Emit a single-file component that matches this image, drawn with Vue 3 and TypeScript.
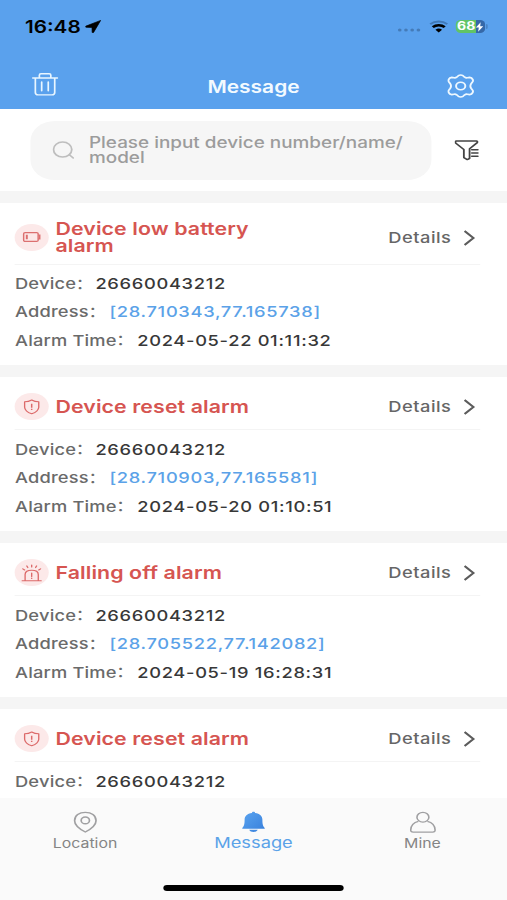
<script setup lang="ts">
type AlarmIcon = 'battery' | 'shield' | 'siren'

interface Alarm {
  id: number
  icon: AlarmIcon
  title: string
  device: string
  address: string
  time: string
}

const alarms: Alarm[] = [
  { id: 1, icon: 'battery', title: 'Device low battery alarm', device: '26660043212', address: '[28.710343,77.165738]', time: '2024-05-22 01:11:32' },
  { id: 2, icon: 'shield', title: 'Device reset alarm', device: '26660043212', address: '[28.710903,77.165581]', time: '2024-05-20 01:10:51' },
  { id: 3, icon: 'siren', title: 'Falling off alarm', device: '26660043212', address: '[28.705522,77.142082]', time: '2024-05-19 16:28:31' },
  { id: 4, icon: 'shield', title: 'Device reset alarm', device: '26660043212', address: '', time: '' },
]
</script>

<template>
  <div class="screen">
    <header class="header">
      <div class="status">
        <span class="clock">16:48</span>
        <svg class="arrow" width="13" height="13" viewBox="0 0 13 13"><path d="M12.6.4.5 6.1c-.7.4-.6 1.2.2 1.2l4.8.2.1 4.7c0 .8.9.9 1.2.2z" fill="#000" stroke="#000" stroke-width=".6" stroke-linejoin="round" /></svg>
        <span class="grow"></span>
        <svg class="dots" width="20" height="4" viewBox="0 0 20 4" fill="#447bb8"><circle cx="2" cy="2" r="1.5" /><circle cx="7.1" cy="2" r="1.5" /><circle cx="12.2" cy="2" r="1.5" /><circle cx="17.3" cy="2" r="1.5" /></svg>
        <svg class="wifi" width="16" height="13" viewBox="0 0 16 13" fill="none">
          <path d="M1 4.1a10.5 10.5 0 0 1 14 0" stroke="#4079b8" stroke-width="1.9" />
          <path d="M3.1 7.1a7.2 7.2 0 0 1 9.8 0" stroke="#000" stroke-width="2.4" />
          <path d="M5.3 9.7a4 4 0 0 1 5.4 0L8 12.6z" fill="#000" />
        </svg>
        <div class="battery">
          <span class="level">68</span>
          <svg width="7" height="10" viewBox="0 0 7 10"><path d="M4.4.3.5 5.5h2.4l-.6 4.2 4.2-5.5H4z" fill="#fff" /></svg>
        </div>
        <span class="cap"></span>
      </div>
      <div class="nav">
        <svg width="22" height="24" viewBox="0 0 22 24" fill="none" stroke="#e9f6ff" stroke-width="1.4" stroke-linejoin="round" stroke-linecap="round">
          <path d="M.9 6h20.2M6.3 5.8V3.2c0-1 .4-1.5 1.3-1.5h6.8c.9 0 1.3.5 1.3 1.5v2.6M3 6.3v14.2c0 1.6.8 2.4 2.3 2.4h11.3c1.5 0 2.3-.8 2.3-2.4V6.3M8.2 9.9v8.8M13.6 9.9v8.8" />
        </svg>
        <h1>Message</h1>
        <svg class="gear" width="22" height="24" viewBox="0 0 22 24" fill="none" stroke="#eef8ff" stroke-width="1.6" stroke-linejoin="round">
          <path d="M9.1 1.7Q11 .4 12.9 1.7L14.3 3.2Q15.2 4 16.4 3.8L18.4 3.4Q20.1 3.5 20.8 5.4Q21.5 7.2 20.5 8.2L19.6 9.6Q18.3 12 19.6 14.4L20.5 15.8Q21.5 16.8 20.8 18.6Q20.1 20.5 18.4 20.6L16.4 20.2Q15.2 20 14.3 20.8L12.9 22.3Q11 23.6 9.1 22.3L7.7 20.8Q6.8 20 5.6 20.2L3.6 20.6Q1.9 20.5 1.2 18.6Q.5 16.8 1.5 15.8L2.4 14.4Q3.7 12 2.4 9.6L1.5 8.2Q.5 7.2 1.2 5.4Q1.9 3.5 3.6 3.4L5.6 3.8Q6.8 4 7.7 3.2Z" />
          <circle cx="11" cy="12" r="3.8" />
        </svg>
      </div>
    </header>

    <div class="search-row">
      <div class="search">
        <svg width="19" height="20" viewBox="0 0 19 20" fill="none" stroke="#bebebe" stroke-width="1.5" stroke-linecap="round"><circle cx="8.4" cy="9.6" r="7.5" /><path d="m13.9 14.8 3.2 3.2" /></svg>
        <span>Please input device number/name/<br />model</span>
      </div>
      <svg class="filter" width="20" height="21" viewBox="0 0 20 21" fill="none" stroke="#444" stroke-width="1.5" stroke-linejoin="round" stroke-linecap="round">
        <path d="M12.2 18.5 10.4 19.6 7.6 17.6V9.5L.8 3Q.3 1.2 1.5 1.1H17.8Q19.2 1.3 18.6 2.6L12.3 8.8V18.5M14.1 9.8H19.1M14.1 13H19.1M14.1 16.2H19.1" />
      </svg>
    </div>

    <main class="list">
      <article v-for="alarm in alarms" :key="alarm.id" class="card">
        <div class="card-head">
          <div class="badge">
            <svg v-if="alarm.icon === 'battery'" width="16" height="12" viewBox="0 0 16 12" fill="none" stroke="#dc7070" stroke-width="1.2">
              <rect x="1.4" y="1.6" width="11.9" height="8.8" rx="1.2" /><path d="M13.5 4.2h1.1v3.6h-1.1" /><path d="M4 3.8v4.5" stroke-width="1.6" />
            </svg>
            <svg v-else-if="alarm.icon === 'shield'" width="14" height="16" viewBox="0 0 14 16" fill="none" stroke="#dc6a6a" stroke-width="1.1" stroke-linejoin="round">
              <path d="M7 1Q9.5 2.8 12.8 2.8V8.2Q12.6 12.5 7 14.8Q1.4 12.5 1.2 8.2V2.8Q4.5 2.8 7 1Z" /><path d="M7 4.8v4M7 9.8v1.3" stroke-width="1.2" />
            </svg>
            <svg v-else width="18" height="18" viewBox="0 0 18 18" fill="none" stroke="#dc6a6a" stroke-width="1.1" stroke-linecap="round">
              <path d="M1.2 16.7h15.6M3.6 16.4V10.6Q3.6 6.2 9 6.2T14.4 10.6V16.4M9 9v3.4M9 14v.4M9 1v2M5 1.9l.8 1.7M13 1.9l-.8 1.7M1.7 4.9l1.5 1.1M16.3 4.9l-1.5 1.1" />
            </svg>
          </div>
          <h2>{{ alarm.title }}</h2>
          <span class="details">Details</span>
          <svg class="chevron" width="10" height="16" viewBox="0 0 10 16" fill="none" stroke="#5c5c5c" stroke-width="1.8"><path d="m1.2 1 7.3 7-7.3 7" /></svg>
        </div>
        <dl>
          <div class="row"><dt>Device<i>：</i></dt><dd>{{ alarm.device }}</dd></div>
          <div v-if="alarm.address" class="row"><dt class="address-label">Address<i>：</i></dt><dd class="link">{{ alarm.address }}</dd></div>
          <div v-if="alarm.time" class="row"><dt class="time-label">Alarm Time<i>：</i></dt><dd>{{ alarm.time }}</dd></div>
        </dl>
      </article>
    </main>

    <footer class="tabs">
      <nav>
        <a class="tab">
          <svg width="20" height="22" viewBox="0 0 20 22" fill="none" stroke="#a0a0a2" stroke-width="1.4" stroke-linejoin="round"><path d="M10 21Q1.2 15.4 1.2 9.7C1.2 4.4 5 1.4 10 1.4s8.8 3 8.8 8.3Q18.8 15.4 10 21Z" /><circle cx="10" cy="9.4" r="3.4" /></svg>
          <span>Location</span>
        </a>
        <a class="tab active">
          <svg width="20" height="22" viewBox="0 0 20 22"><defs><linearGradient id="bell" x1="0" y1="0" x2="1" y2="1"><stop stop-color="#5aa4f0" /><stop offset="1" stop-color="#377fdb" /></linearGradient></defs><path d="M10 .8c.8 0 1.3.5 1.3 1.2 3.9.7 6 3.2 6 6.7 0 4.5.4 6.4 1.9 8.2v.8H.8v-.8c1.5-1.8 1.9-3.7 1.9-8.2 0-3.5 2.1-6 6-6.7 0-.7.5-1.2 1.3-1.2zM6.5 18.8h7c-.5 1.4-1.8 2.2-3.5 2.2s-3-.8-3.5-2.2z" fill="url(#bell)" /></svg>
          <span>Message</span>
        </a>
        <a class="tab">
          <svg width="22" height="22" viewBox="0 0 22 22" fill="none" stroke="#a0a0a2" stroke-width="1.3" stroke-linejoin="round"><circle cx="11" cy="6.2" r="4.9" /><path d="M7.3 10.4C3.3 11.6 1.2 14.6 1 18.9Q.9 21.1 3 21.1H19Q21.1 21.1 21 18.9C20.8 14.6 18.7 11.6 14.7 10.4" /></svg>
          <span>Mine</span>
        </a>
      </nav>
      <div class="home"></div>
    </footer>
  </div>
</template>

<style>
body {
  margin: 0;
  overflow: hidden;
}
</style>

<style scoped>
/* The phone layout is 416 units wide, widened to fill the viewport. */
.screen {
  width: 416px;
  height: 900px;
  transform: scaleX(1.21875);
  transform-origin: 0 0;
  display: flex;
  flex-direction: column;
  overflow: hidden;
  background: #fff;
  font-family: Inter, "Noto Sans CJK SC", sans-serif;
  font-weight: 500;
}
svg {
  display: block;
  flex: none;
}
.header {
  height: 109px;
  flex: none;
  background: #5aa1ed;
}
.status {
  display: flex;
  align-items: center;
  height: 53px;
  padding: 0 16px 0 20.5px;
  box-sizing: border-box;
}
.clock {
  width: 46px;
  font-size: 17px;
  font-weight: 600;
  white-space: nowrap;
}
.arrow {
  margin-left: 3.5px;
}
.grow {
  flex: 1;
}
.dots {
  margin: 7px 6px 0 0;
}
.wifi {
  margin-right: 5.5px;
}
.battery {
  display: flex;
  align-items: center;
  width: 24px;
  height: 13px;
  padding-left: 1.5px;
  box-sizing: border-box;
  border-radius: 4px;
  background: linear-gradient(90deg, #61c466 68%, #3568a8 68%);
}
.level {
  width: 15px;
  color: #fff;
  font-size: 11.5px;
  font-weight: 700;
  line-height: 13px;
}
.cap {
  width: 1.5px;
  height: 5px;
  margin-left: 1px;
  border-radius: 0 2px 2px 0;
  background: #447bb8;
}
.nav {
  display: flex;
  justify-content: space-between;
  align-items: center;
  height: 61px;
  padding: 0 27px 0 26px;
}
h1 {
  margin: 7px 0 0 1px;
  color: #f3faff;
  font-size: 17.2px;
  font-weight: 600;
  line-height: 22px;
}
.gear {
  margin-top: 4px;
}
.search-row {
  display: flex;
  align-items: center;
  flex: none;
  height: 82px;
  padding-left: 25px;
}
.search {
  display: flex;
  align-items: center;
  width: 329px;
  height: 59px;
  padding-left: 17.5px;
  box-sizing: border-box;
  border-radius: 20px;
  background: #f6f6f6;
  color: #9c9c9c;
  font-size: 15.5px;
  line-height: 15.5px;
  white-space: nowrap;
}
.search span {
  margin-left: 11.5px;
}
.filter {
  margin-left: 19px;
}
.list {
  flex: 1;
  min-height: 0;
  overflow: hidden;
}
.card {
  padding: 16.5px 0 10.1px;
  border-top: 12px solid #f5f5f5;
}
.card-head {
  display: flex;
  align-items: center;
  margin: 0 22px 0 12px;
  padding-bottom: 9px;
  border-bottom: 1px solid #f4f4f4;
}
.badge {
  display: grid;
  place-items: center;
  flex: none;
  width: 27.5px;
  height: 27px;
  border-radius: 50%;
  background: #fce9e9;
}
h2 {
  width: 180px;
  margin: 0 auto 0 6px;
  color: #d65551;
  font-size: 17.5px;
  font-weight: 600;
  line-height: 17.5px;
  letter-spacing: 0.08px;
}
.details {
  color: #666;
  font-size: 15px;
  letter-spacing: 0.4px;
}
.chevron {
  margin: 1px 4px 0 9.6px;
}
dl {
  margin: 5.5px 0 0;
  padding-left: 12.3px;
}
.row {
  display: flex;
  height: 28.3px;
  line-height: 28.3px;
  font-size: 15px;
  white-space: nowrap;
}
dt {
  width: 66px;
  color: #6a6a6a;
  letter-spacing: 0.15px;
}
dt i {
  position: relative;
  top: -0.5px;
  left: -0.5px;
  font-style: normal;
  font-weight: 400;
}
.address-label {
  width: 77.5px;
}
.time-label {
  width: 100.3px;
}
dd {
  margin: 0;
  color: #383838;
  letter-spacing: 0.56px;
}
.link {
  color: #5ba2e8;
}
.tabs {
  flex: none;
  height: 102px;
  background: #fafafa;
}
nav {
  display: grid;
  grid-template-columns: repeat(3, 1fr);
  height: 87px;
}
.tab {
  display: flex;
  flex-direction: column;
  align-items: center;
  padding-top: 13px;
  color: #858585;
  font-size: 13px;
  font-weight: 400;
  line-height: 20px;
}
.tab:first-child {
  padding-left: 1px;
}
.active {
  color: #5ba2e8;
  font-size: 15px;
}
.home {
  width: 148px;
  height: 6px;
  margin: 0 auto;
  border-radius: 3px;
  background: #000;
}
</style>
